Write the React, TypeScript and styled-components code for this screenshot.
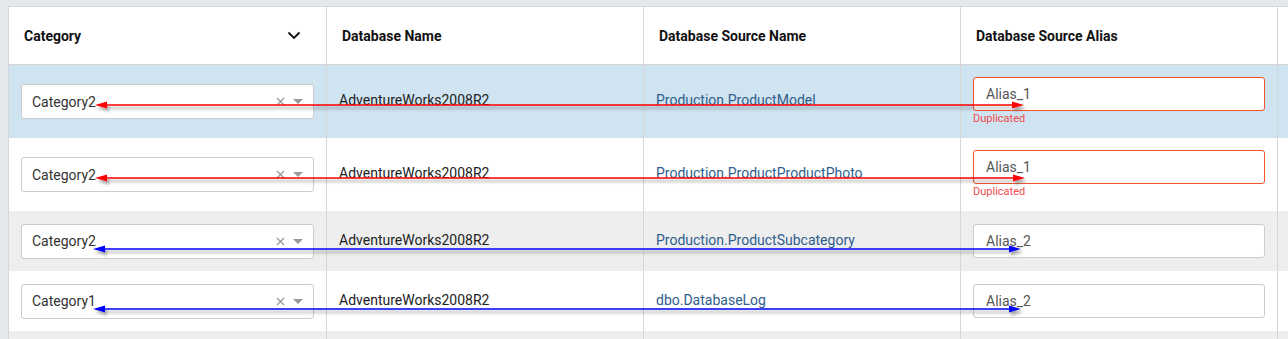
import * as React from "react";
import styled, { createGlobalStyle } from "styled-components";

const GlobalStyle = createGlobalStyle`
  html, body {
    margin: 0;
    padding: 0;
    background: #e5e8eb;
    font-family: Roboto, "Liberation Sans", Arial, sans-serif;
    overflow: hidden;
  }
`;

type Item = {
  category: string;
  dbName: string;
  source: string;
  alias: string;
  error?: string;
};

const ROWS: Item[] = [
  { category: "Category2", dbName: "AdventureWorks2008R2", source: "Production.ProductModel", alias: "Alias_1", error: "Duplicated" },
  { category: "Category2", dbName: "AdventureWorks2008R2", source: "Production.ProductProductPhoto", alias: "Alias_1", error: "Duplicated" },
  { category: "Category2", dbName: "AdventureWorks2008R2", source: "Production.ProductSubcategory", alias: "Alias_2" },
  { category: "Category1", dbName: "AdventureWorks2008R2", source: "dbo.DatabaseLog", alias: "Alias_2" },
];

// annotation arrows drawn over the grid (page coordinates)
const ARROWS = [
  { y: 105, x1: 95, x2: 1024, color: "#ff0000" },
  { y: 178, x1: 95, x2: 1025, color: "#ff0000" },
  { y: 249, x1: 93, x2: 1021, color: "#0000ff" },
  { y: 309, x1: 93, x2: 1021, color: "#0000ff" },
];

const App = () => (
  <>
    <GlobalStyle />
    <Page>
      <Grid>
        <HeaderRow>
          <HeaderCell>
            Category
            <svg width="14" height="9" viewBox="0 0 14 9">
              <path d="M1.5 1.5 L7 7 L12.5 1.5" fill="none" stroke="#111" strokeWidth="1.8" />
            </svg>
          </HeaderCell>
          <HeaderCell>Database Name</HeaderCell>
          <HeaderCell>Database Source Name</HeaderCell>
          <HeaderCell>Database Source Alias</HeaderCell>
          <HeaderCell />
        </HeaderRow>
        {ROWS.map((r, i) => (
          <BodyRow key={i} tone={i === 0 ? "selected" : i % 2 === 0 ? "striped" : "plain"}>
            <Cell>
              <Select>
                <SelectValue>{r.category}</SelectValue>
                <svg width="9" height="9" viewBox="0 0 9 9">
                  <path d="M1 1 L8 8 M8 1 L1 8" stroke="#9a9a9a" strokeWidth="1.4" />
                </svg>
                <svg width="10" height="5" viewBox="0 0 10 5">
                  <path d="M0 0 H10 L5 5 Z" fill="#9a9a9a" />
                </svg>
              </Select>
            </Cell>
            <Cell>
              <Text>{r.dbName}</Text>
            </Cell>
            <Cell>
              <SourceText>{r.source}</SourceText>
            </Cell>
            <AliasCell>
              <AliasInput invalid={!!r.error}>{r.alias}</AliasInput>
              {r.error && <ErrorText>{r.error}</ErrorText>}
            </AliasCell>
            <Cell />
          </BodyRow>
        ))}
        <BodyRow tone="striped">
          <Cell />
          <Cell />
          <Cell />
          <Cell />
          <Cell />
        </BodyRow>
      </Grid>
      <Overlay width="1288" height="339" viewBox="0 0 1288 339">
        <defs>
          <filter id="shadow" x="-5%" y="-200%" width="110%" height="500%">
            <feDropShadow dx="2" dy="3" stdDeviation="1.4" floodColor="#555" floodOpacity="0.55" />
          </filter>
        </defs>
        {ARROWS.map((a, i) => (
          <g key={i} fill={a.color} stroke={a.color} filter="url(#shadow)">
            <line x1={a.x1 + 8} y1={a.y} x2={a.x2 - 8} y2={a.y} strokeWidth="1.6" />
            <polygon points={`${a.x1},${a.y} ${a.x1 + 12},${a.y - 3.5} ${a.x1 + 12},${a.y + 3.5}`} stroke="none" />
            <polygon points={`${a.x2},${a.y} ${a.x2 - 12},${a.y - 3.5} ${a.x2 - 12},${a.y + 3.5}`} stroke="none" />
          </g>
        ))}
      </Overlay>
    </Page>
  </>
);

const Page = styled.div`
  position: relative;
  width: 1288px;
  height: 339px;
  padding: 6px 0 0 8px;
  box-sizing: border-box;
  overflow: hidden;
`;

const Grid = styled.div`
  background: #fff;
  border-top: 1px solid #d3d6da;
  border-left: 1px solid #d3d6da;
`;

const RowBase = styled.div`
  display: grid;
  grid-template-columns: 318px 317px 317px 317px 1fr;
`;

const HeaderRow = styled(RowBase)`
  height: 57px;
  border-bottom: 1px solid #d6d6d6;
  background: #fff;
`;

const HeaderCell = styled.div`
  display: flex;
  align-items: center;
  justify-content: space-between;
  padding: 0 25px 0 15px;
  border-right: 1px solid #d6d6d6;
  font-size: 14px;
  font-weight: 700;
  color: #111;
  &:last-child {
    border-right: none;
  }
`;

const BodyRow = styled(RowBase)<{ tone: "selected" | "striped" | "plain" }>`
  min-height: 60px;
  background: ${(p) => (p.tone === "selected" ? "#cfe3f1" : p.tone === "striped" ? "#eeeeee" : "#ffffff")};
`;

const Cell = styled.div`
  display: flex;
  align-items: center;
  padding: 0 12px;
  border-right: 1px solid #d6d6d6;
  min-width: 0;
  &:last-child {
    border-right: none;
  }
`;

const AliasCell = styled(Cell)`
  flex-direction: column;
  align-items: stretch;
  justify-content: center;
  padding: 12px 12px;
`;

const Text = styled.span`
  font-size: 14px;
  line-height: 16px;
  padding-bottom: 3px;
  color: #222;
  white-space: nowrap;
`;

const SourceText = styled(Text)`
  color: #2f5d8c;
`;

const Select = styled.div`
  flex: 1;
  height: 35px;
  display: flex;
  align-items: center;
  gap: 8px;
  padding: 0 10px;
  box-sizing: border-box;
  background: #fff;
  border: 1px solid #cccccc;
  border-radius: 3px;
`;

const SelectValue = styled.span`
  flex: 1;
  font-size: 14px;
  color: #333;
`;

const AliasInput = styled.div<{ invalid: boolean }>`
  height: 34px;
  display: flex;
  align-items: center;
  padding: 0 12px;
  box-sizing: border-box;
  background: #fff;
  border: 1px solid ${(p) => (p.invalid ? "#f2512b" : "#cccccc")};
  border-radius: 3px;
  font-size: 14px;
  color: #555;
`;

const ErrorText = styled.div`
  font-size: 11px;
  line-height: 15px;
  color: #f24b4b;
`;

const Overlay = styled.svg`
  position: absolute;
  top: 0;
  left: 0;
  pointer-events: none;
`;

export default App;
